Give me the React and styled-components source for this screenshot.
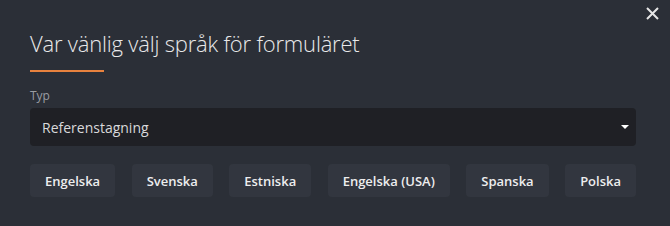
import styled, { createGlobalStyle } from 'styled-components';

const GlobalStyle = createGlobalStyle`
  html, body {
    margin: 0;
    padding: 0;
    background: #2b2f37;
  }
`;

const languages = ['Engelska', 'Svenska', 'Estniska', 'Engelska (USA)', 'Spanska', 'Polska'];

const App = () => {
  return (
    <>
      <GlobalStyle />
      <Modal>
        <CloseButton aria-label="Stäng">
          <svg width="13" height="13" viewBox="0 0 13 13">
            <path d="M1 1 L12 12 M12 1 L1 12" stroke="#e6e6e6" strokeWidth="2" />
          </svg>
        </CloseButton>
        <Title>Var vänlig välj språk för formuläret</Title>
        <Accent />
        <Label>Typ</Label>
        <Select>
          <span>Referenstagning</span>
          <Caret />
        </Select>
        <Languages>
          {languages.map((lang) => (
            <LangButton key={lang}>{lang}</LangButton>
          ))}
        </Languages>
      </Modal>
    </>
  );
};

const Modal = styled.div`
  position: relative;
  width: 670px;
  height: 226px;
  box-sizing: border-box;
  padding: 29px 34px 0 30px;
  background: #2b2f37;
  font-family: 'Open Sans', 'Liberation Sans', sans-serif;
`;

const CloseButton = styled.button`
  position: absolute;
  top: 7px;
  right: 11px;
  background: none;
  border: none;
  padding: 0;
  cursor: pointer;
`;

const Title = styled.h2`
  margin: 0;
  font-weight: 300;
  font-size: 22px;
  line-height: 28px;
  color: #e9e9ea;
  letter-spacing: -0.2px;
`;

const Accent = styled.div`
  width: 74px;
  height: 2px;
  margin-top: 13px;
  background: #e8823e;
`;

const Label = styled.div`
  margin-top: 17px;
  font-size: 12px;
  line-height: 14px;
  color: #9a9da3;
`;

const Select = styled.div`
  display: flex;
  align-items: center;
  justify-content: space-between;
  height: 38px;
  margin-top: 5px;
  padding: 0 7px 0 12px;
  border-radius: 4px;
  background: #1f2025;
  color: #d9d9db;
  font-size: 14px;
`;

const Caret = styled.span`
  width: 0;
  height: 0;
  border-left: 4px solid transparent;
  border-right: 4px solid transparent;
  border-top: 4px solid #ffffff;
`;

const Languages = styled.div`
  display: flex;
  justify-content: space-between;
  margin-top: 18px;
`;

const LangButton = styled.button`
  height: 33px;
  padding: 0 15px;
  border: none;
  border-radius: 4px;
  background: #32363f;
  color: #ededee;
  font-family: 'Open Sans', 'Liberation Sans', sans-serif;
  font-size: 13px;
  font-weight: 600;
  cursor: pointer;
`;

export default App;
